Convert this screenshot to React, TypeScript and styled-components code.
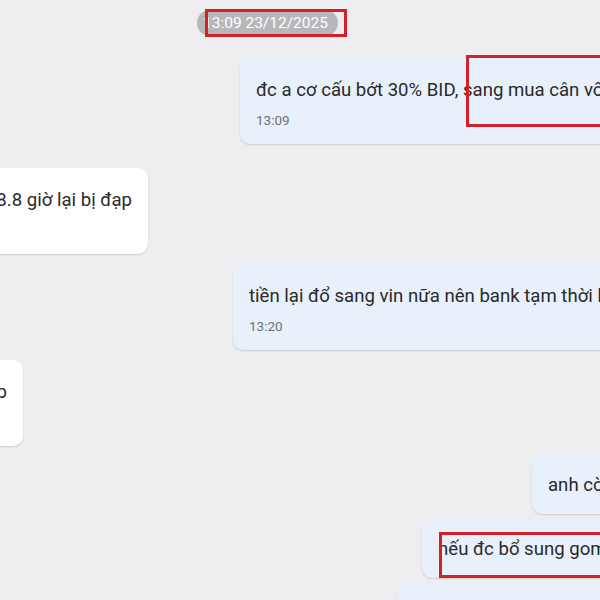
import React from "react";
import styled, { createGlobalStyle } from "styled-components";

const GlobalStyle = createGlobalStyle`
  html, body {
    margin: 0;
    padding: 0;
    background: #eeeef1;
    overflow: hidden;
  }
  * { box-sizing: border-box; }
`;

const Page = styled.div`
  position: relative;
  width: 600px;
  height: 600px;
  overflow: hidden;
  background: #eeeef1;
  display: flex;
  flex-direction: column;
  padding-top: 10px;
  font-family: Roboto, "Noto Sans", "Liberation Sans", sans-serif;
`;

const DateRow = styled.div<{ $inset: number }>`
  display: flex;
  flex-shrink: 0;
  padding-left: ${(p) => p.$inset}px;
`;

const DatePill = styled.div`
  height: 26px;
  line-height: 26px;
  padding: 0 10px 0 6px;
  border-radius: 13px;
  background: #b7b7bb;
  color: #ffffff;
  font-size: 15.5px;
  white-space: nowrap;
`;

const Row = styled.div<{ $side: "in" | "out"; $inset: number; $top: number }>`
  display: flex;
  flex-shrink: 0;
  margin-top: ${(p) => p.$top}px;
  ${(p) =>
    p.$side === "out"
      ? `padding-left: ${p.$inset}px; justify-content: flex-start;`
      : `width: ${p.$inset}px; justify-content: flex-end;`}
`;

const Bubble = styled.div<{ $side: "in" | "out"; $timed: boolean }>`
  flex-shrink: 0;
  white-space: nowrap;
  background: ${(p) => (p.$side === "out" ? "#e8f0fb" : "#ffffff")};
  border-radius: 10px;
  box-shadow: 0 1px 2px rgba(0, 0, 0, 0.14);
  padding: ${(p) => (p.$timed ? "19px 16px 15px" : "16px")};
`;

const MsgText = styled.div`
  font-size: 18.6px;
  line-height: 26px;
  color: #2a2a2a;
`;

const Time = styled.div`
  margin-top: 8px;
  font-size: 13.5px;
  line-height: 18px;
  color: #707070;
`;

const Highlight = styled.div<{ $x: number; $y: number; $w: number; $h: number }>`
  position: absolute;
  left: ${(p) => p.$x}px;
  top: ${(p) => p.$y}px;
  width: ${(p) => p.$w}px;
  height: ${(p) => p.$h}px;
  border: 3.5px solid #d3202a;
  pointer-events: none;
`;

type Msg = {
  side: "in" | "out";
  inset: number;
  top: number;
  text: string;
  time?: string;
};

const messages: Msg[] = [
  { side: "out", inset: 240, top: 22, text: "đc a cơ cấu bớt 30% BID, sang mua cân vốn", time: "13:09" },
  { side: "in", inset: 148, top: 24, text: "cứ lên 18.8 giờ lại bị đạp", time: "13:12" },
  { side: "out", inset: 233, top: 10, text: "tiền lại đổ sang vin nữa nên bank tạm thời khó chạy", time: "13:20" },
  { side: "in", inset: 23, top: 10, text: "em thấy nên chờ thêm nhịp", time: "13:22" },
  { side: "out", inset: 532, top: 10, text: "anh còn giữ" },
  { side: "out", inset: 422, top: 6, text: "nếu đc bổ sung gom thêm" },
  { side: "out", inset: 397, top: 6, text: "để em xem lại danh mục" },
];

export default function App() {
  return (
    <>
      <GlobalStyle />
      <Page>
        <DateRow $inset={197}>
          <DatePill>13:09 23/12/2025</DatePill>
        </DateRow>
        {messages.map((m, i) => (
          <Row key={i} $side={m.side} $inset={m.inset} $top={m.top}>
            <Bubble $side={m.side} $timed={!!m.time}>
              <MsgText>{m.text}</MsgText>
              {m.time && <Time>{m.time}</Time>}
            </Bubble>
          </Row>
        ))}
        <Highlight $x={205} $y={9} $w={142} $h={28} />
        <Highlight $x={466} $y={55} $w={140} $h={72} />
        <Highlight $x={439} $y={532} $w={165} $h={46} />
      </Page>
    </>
  );
}
